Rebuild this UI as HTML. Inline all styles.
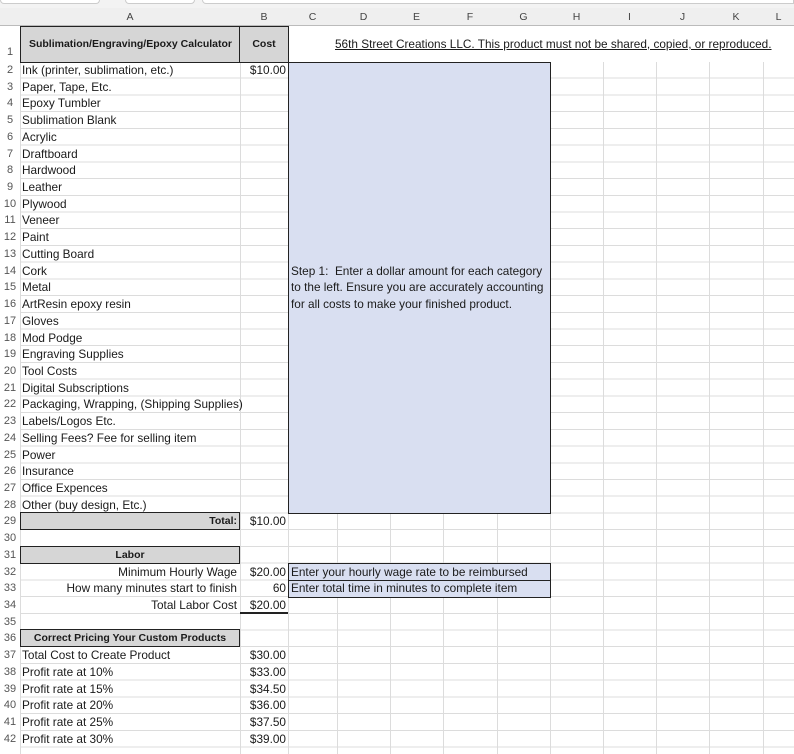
<!DOCTYPE html>
<html><head><meta charset="utf-8"><style>
*{margin:0;padding:0;box-sizing:border-box}
body{width:794px;height:754px;overflow:hidden;background:#fff;font-family:"Liberation Sans",sans-serif;font-size:11.8px;color:#1a1a1a;position:relative}
.grid{position:absolute;left:20px;top:62px;width:774px;height:692px;background:repeating-linear-gradient(to bottom,transparent 0,transparent 15.72px,#dcdcdc 15.72px,#dcdcdc 16.72px)}
.v{position:absolute;top:26px;width:1px;height:728px;background:#dcdcdc}
.t{position:absolute;height:16.72px;line-height:16.72px;top:calc(62px + (var(--r) - 2) * 16.72px);white-space:nowrap}
.rn{left:0;width:20px;text-align:center;color:#555;font-size:11px}
.a{left:22px}
.b{left:236px;width:50px;text-align:right}
.ar{left:20px;width:217px;text-align:right}
.box{position:absolute;border:1.5px solid #222}
.g{background:#d6d6d6}
.bl{background:#d9dff1}
.hd{position:absolute;top:8px;height:18px;line-height:18px;text-align:center;color:#444;font-size:10.5px;background:#efefef;border-bottom:1.5px solid #bbb}
.bd{font-weight:bold;font-size:10.5px}
</style></head><body>
<div style="position:absolute;left:0;top:0;width:794px;height:8px;background:#f3f3f3"></div>
<div style="position:absolute;left:0;top:0;width:100px;height:4px;border:1px solid #ccc;border-top:none;border-radius:0 0 4px 4px;background:#fff"></div>
<div style="position:absolute;left:125px;top:0;width:70px;height:4px;border:1px solid #ccc;border-top:none;border-radius:0 0 4px 4px;background:#fff"></div>
<div style="position:absolute;left:202px;top:0;width:592px;height:4px;border:1px solid #ccc;border-top:none;border-radius:0 0 0 4px;background:#fff"></div>
<div class="hd" style="left:0;width:20px"></div>
<div class="hd" style="left:20px;width:220px">A</div>
<div class="hd" style="left:240px;width:48px">B</div>
<div class="hd" style="left:288px;width:49px">C</div>
<div class="hd" style="left:337px;width:53px">D</div>
<div class="hd" style="left:390px;width:53px">E</div>
<div class="hd" style="left:443px;width:54px">F</div>
<div class="hd" style="left:497px;width:53px">G</div>
<div class="hd" style="left:550px;width:53px">H</div>
<div class="hd" style="left:603px;width:53px">I</div>
<div class="hd" style="left:656px;width:53px">J</div>
<div class="hd" style="left:709px;width:54px">K</div>
<div class="hd" style="left:763px;width:31px">L</div>
<div class="grid"></div>
<div class="v" style="left:20px"></div><div class="v" style="left:240px"></div><div class="v" style="left:288px"></div><div class="v" style="left:337px"></div><div class="v" style="left:390px"></div><div class="v" style="left:443px"></div><div class="v" style="left:497px"></div><div class="v" style="left:550px"></div><div class="v" style="left:603px"></div><div class="v" style="left:656px"></div><div class="v" style="left:709px"></div><div class="v" style="left:763px"></div>
<div style="position:absolute;left:288px;top:26px;width:506px;height:36px;background:#fff"></div>
<div style="position:absolute;left:0;top:26px;width:20px;height:728px;background:#fff"></div>

<div class="box g bd" style="left:20px;top:26px;width:221px;height:37px;text-align:center;line-height:34px">Sublimation/Engraving/Epoxy Calculator</div>
<div class="box g bd" style="left:239px;top:26px;width:50px;height:37px;text-align:center;line-height:34px">Cost</div>
<div style="position:absolute;left:335px;top:26px;width:440px;height:36px;line-height:36px;text-align:left;text-decoration:underline">56th Street Creations LLC. This product must not be shared, copied, or reproduced.</div>
<div style="position:absolute;left:0;top:46px;width:20px;text-align:center;color:#555;font-size:11px">1</div>

<div class="box bl" style="left:288px;top:62px;width:263px;height:452px"></div>
<div class="box g" style="left:20px;top:512.4px;width:220px;height:18px"></div>
<div class="box g" style="left:20px;top:545.8px;width:220px;height:18px"></div>
<div class="box bl" style="left:288px;top:562.5px;width:263px;height:35px;border-width:1.5px"></div>
<div style="position:absolute;left:288px;top:579.5px;width:263px;height:1px;background:#222"></div>
<div style="position:absolute;left:240px;top:612px;width:48px;height:1.5px;background:#222"></div>
<div class="box g" style="left:20px;top:629.2px;width:220px;height:18px"></div>

<div class="t rn" style="--r:2">2</div><div class="t a" style="--r:2">Ink (printer, sublimation, etc.)</div><div class="t b" style="--r:2">$10.00</div>
<div class="t rn" style="--r:3">3</div><div class="t a" style="--r:3">Paper, Tape, Etc.</div>
<div class="t rn" style="--r:4">4</div><div class="t a" style="--r:4">Epoxy Tumbler</div>
<div class="t rn" style="--r:5">5</div><div class="t a" style="--r:5">Sublimation Blank</div>
<div class="t rn" style="--r:6">6</div><div class="t a" style="--r:6">Acrylic</div>
<div class="t rn" style="--r:7">7</div><div class="t a" style="--r:7">Draftboard</div>
<div class="t rn" style="--r:8">8</div><div class="t a" style="--r:8">Hardwood</div>
<div class="t rn" style="--r:9">9</div><div class="t a" style="--r:9">Leather</div>
<div class="t rn" style="--r:10">10</div><div class="t a" style="--r:10">Plywood</div>
<div class="t rn" style="--r:11">11</div><div class="t a" style="--r:11">Veneer</div>
<div class="t rn" style="--r:12">12</div><div class="t a" style="--r:12">Paint</div>
<div class="t rn" style="--r:13">13</div><div class="t a" style="--r:13">Cutting Board</div>
<div class="t rn" style="--r:14">14</div><div class="t a" style="--r:14">Cork</div>
<div class="t rn" style="--r:15">15</div><div class="t a" style="--r:15">Metal</div>
<div class="t rn" style="--r:16">16</div><div class="t a" style="--r:16">ArtResin epoxy resin</div>
<div class="t rn" style="--r:17">17</div><div class="t a" style="--r:17">Gloves</div>
<div class="t rn" style="--r:18">18</div><div class="t a" style="--r:18">Mod Podge</div>
<div class="t rn" style="--r:19">19</div><div class="t a" style="--r:19">Engraving Supplies</div>
<div class="t rn" style="--r:20">20</div><div class="t a" style="--r:20">Tool Costs</div>
<div class="t rn" style="--r:21">21</div><div class="t a" style="--r:21">Digital Subscriptions</div>
<div class="t rn" style="--r:22">22</div><div class="t a" style="--r:22">Packaging, Wrapping, (Shipping Supplies)</div>
<div class="t rn" style="--r:23">23</div><div class="t a" style="--r:23">Labels/Logos Etc.</div>
<div class="t rn" style="--r:24">24</div><div class="t a" style="--r:24">Selling Fees? Fee for selling item</div>
<div class="t rn" style="--r:25">25</div><div class="t a" style="--r:25">Power</div>
<div class="t rn" style="--r:26">26</div><div class="t a" style="--r:26">Insurance</div>
<div class="t rn" style="--r:27">27</div><div class="t a" style="--r:27">Office Expences</div>
<div class="t rn" style="--r:28">28</div><div class="t a" style="--r:28">Other (buy design, Etc.)</div>
<div class="t" style="--r:14;left:291px">Step 1:&nbsp; Enter a dollar amount for each category</div>
<div class="t" style="--r:15;left:291px">to the left. Ensure you are accurately accounting</div>
<div class="t" style="--r:16;left:291px">for all costs to make your finished product.</div>
<div class="t rn" style="--r:29">29</div><div class="t ar bd" style="--r:29">Total:</div><div class="t b" style="--r:29">$10.00</div>
<div class="t rn" style="--r:30">30</div>
<div class="t rn" style="--r:31">31</div><div class="t bd" style="--r:31;left:20px;width:220px;text-align:center">Labor</div>
<div class="t rn" style="--r:32">32</div><div class="t ar" style="--r:32">Minimum Hourly Wage</div><div class="t b" style="--r:32">$20.00</div><div class="t" style="--r:32;left:291px">Enter your hourly wage rate to be reimbursed</div>
<div class="t rn" style="--r:33">33</div><div class="t ar" style="--r:33">How many minutes start to finish</div><div class="t b" style="--r:33">60</div><div class="t" style="--r:33;left:291px">Enter total time in minutes to complete item</div>
<div class="t rn" style="--r:34">34</div><div class="t ar" style="--r:34">Total Labor Cost</div><div class="t b" style="--r:34">$20.00</div>
<div class="t rn" style="--r:35">35</div>
<div class="t rn" style="--r:36">36</div><div class="t bd" style="--r:36;left:20px;width:220px;text-align:center">Correct Pricing Your Custom Products</div>
<div class="t rn" style="--r:37">37</div><div class="t a" style="--r:37">Total Cost to Create Product</div><div class="t b" style="--r:37">$30.00</div>
<div class="t rn" style="--r:38">38</div><div class="t a" style="--r:38">Profit rate at 10%</div><div class="t b" style="--r:38">$33.00</div>
<div class="t rn" style="--r:39">39</div><div class="t a" style="--r:39">Profit rate at 15%</div><div class="t b" style="--r:39">$34.50</div>
<div class="t rn" style="--r:40">40</div><div class="t a" style="--r:40">Profit rate at 20%</div><div class="t b" style="--r:40">$36.00</div>
<div class="t rn" style="--r:41">41</div><div class="t a" style="--r:41">Profit rate at 25%</div><div class="t b" style="--r:41">$37.50</div>
<div class="t rn" style="--r:42">42</div><div class="t a" style="--r:42">Profit rate at 30%</div><div class="t b" style="--r:42">$39.00</div>
</body></html>
